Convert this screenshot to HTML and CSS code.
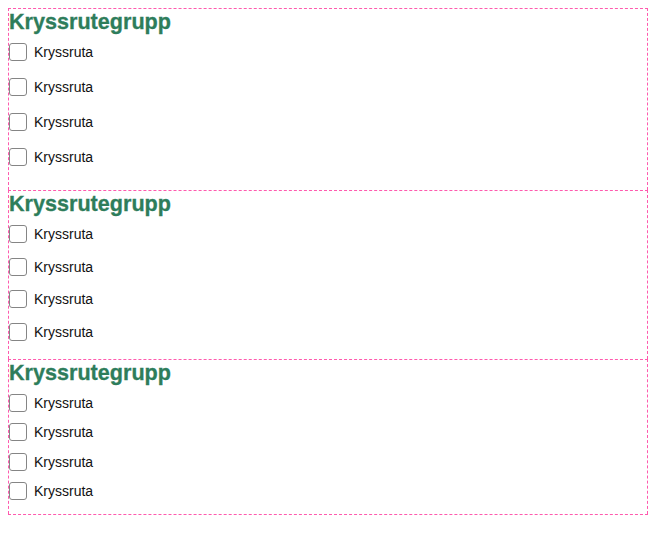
FILE: index.html
```html
<!DOCTYPE html>
<html lang="sv">
<head>
<meta charset="utf-8">
<title>Kryssrutegrupper</title>
<link rel="stylesheet" href="styles.css">
</head>
<body>
<div class="stack">
  <fieldset class="group group--one">
    <h2 class="group-title">Kryssrutegrupp</h2>
    <div class="rows">
      <label class="row"><input type="checkbox" class="box"><span class="text">Kryssruta</span></label>
      <label class="row"><input type="checkbox" class="box"><span class="text">Kryssruta</span></label>
      <label class="row"><input type="checkbox" class="box"><span class="text">Kryssruta</span></label>
      <label class="row"><input type="checkbox" class="box"><span class="text">Kryssruta</span></label>
    </div>
  </fieldset>
  <fieldset class="group group--two">
    <h2 class="group-title">Kryssrutegrupp</h2>
    <div class="rows">
      <label class="row"><input type="checkbox" class="box"><span class="text">Kryssruta</span></label>
      <label class="row"><input type="checkbox" class="box"><span class="text">Kryssruta</span></label>
      <label class="row"><input type="checkbox" class="box"><span class="text">Kryssruta</span></label>
      <label class="row"><input type="checkbox" class="box"><span class="text">Kryssruta</span></label>
    </div>
  </fieldset>
  <fieldset class="group group--three">
    <h2 class="group-title">Kryssrutegrupp</h2>
    <div class="rows">
      <label class="row"><input type="checkbox" class="box"><span class="text">Kryssruta</span></label>
      <label class="row"><input type="checkbox" class="box"><span class="text">Kryssruta</span></label>
      <label class="row"><input type="checkbox" class="box"><span class="text">Kryssruta</span></label>
      <label class="row"><input type="checkbox" class="box"><span class="text">Kryssruta</span></label>
    </div>
  </fieldset>
</div>
</body>
</html>
```

FILE: styles.css
```css
html, body {
  margin: 0;
  padding: 0;
  background: #ffffff;
}

body {
  padding: 8px 0 0 8px;
  font-family: "Liberation Sans", Arial, sans-serif;
}

.stack {
  width: 640px;
  display: flex;
  flex-direction: column;
  border-bottom: 1px dashed #ff5aae;
}

.group {
  margin: 0;
  padding: 0;
  min-width: 0;
  border: 1px dashed #ff5aae;
  border-bottom: none;
  display: flex;
  flex-direction: column;
}

.group-title {
  margin: 0;
  height: 26px;
  font-size: 21.6px;
  line-height: 26px;
  font-weight: 700;
  color: #2e7d5b;
  -webkit-text-stroke: 0.3px #2e7d5b;
  white-space: nowrap;
}

.rows {
  display: flex;
  flex-direction: column;
}

.row {
  display: flex;
  align-items: center;
  gap: 7px;
  font-size: 14px;
  color: #111111;
}

.box {
  appearance: none;
  -webkit-appearance: none;
  margin: 0;
  width: 18px;
  height: 18px;
  border: 1px solid #858585;
  border-radius: 3px;
  background: #ffffff;
  flex: none;
}

.text {
  line-height: 16px;
}

.group--one .rows {
  margin-top: -1px;
  padding: 0 0 16px;
}
.group--one .row {
  height: 35px;
}

.group--two .rows {
  padding: 1px 0 11px;
}
.group--two .row {
  height: 32px;
}
.group--two .row:nth-child(even) {
  height: 33px;
}

.group--three .rows {
  padding: 2px 0 8px;
}
.group--three .row {
  height: 29px;
}
.group--three .row:nth-child(even) {
  height: 30px;
}
```
